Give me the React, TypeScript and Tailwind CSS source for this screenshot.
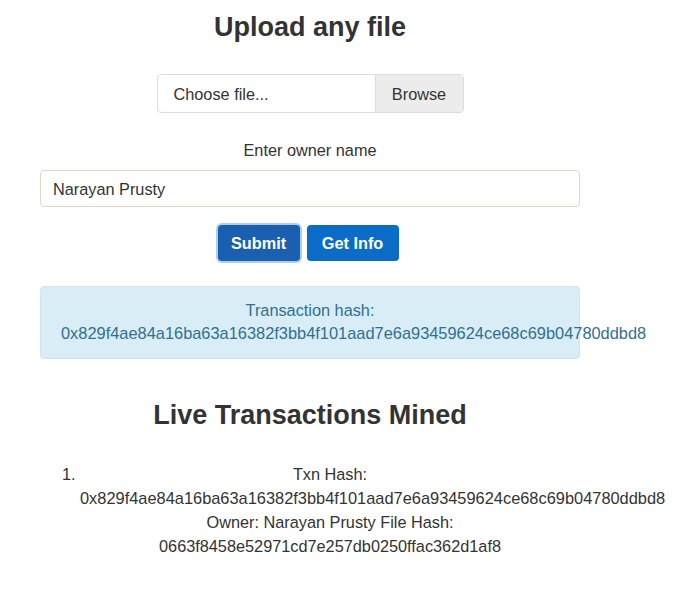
import React from "react";

const font = { fontFamily: '"Liberation Sans", Arial, Helvetica, sans-serif' };

const txHash = "0x829f4ae84a16ba63a16382f3bb4f101aad7e6a93459624ce68c69b04780ddbd8";

export default function App() {
  return (
    <div className="min-h-screen bg-white text-[#333] text-[16.3px] leading-[24px]" style={font}>
      <div className="ml-[40px] w-[540px] pt-[12px]">
        <h1 className="text-center text-[27px] leading-[30px] font-bold">Upload any file</h1>

        <div className="mx-auto mt-[32px] flex h-[39px] w-[307px] rounded-[4px] border border-[#ddd] overflow-hidden">
          <div className="flex flex-1 items-center pl-[16px]">Choose file...</div>
          <div className="flex w-[88px] items-center justify-center border-l border-[#ddd] bg-[#ececec]">
            Browse
          </div>
        </div>

        <p className="mt-[25px] text-center">Enter owner name</p>
        <div className="mt-[8px] flex h-[37px] items-center rounded-[4px] border border-[#ded8c8] pl-[12px]">
          Narayan Prusty
        </div>

        <div className="mt-[18px] flex justify-center gap-[7px] pr-[4px]">
          <button className="h-[36px] w-[82px] rounded-[4px] bg-[#1a5fb0] font-bold text-white ring-2 ring-[#a9d0ef]">
            Submit
          </button>
          <button className="h-[36px] w-[92px] rounded-[4px] bg-[#0b6cc8] font-bold text-white">Get Info</button>
        </div>

        <div className="mt-[25px] rounded-[4px] border border-[#cfe6f2] bg-[#d9edf7] pt-[12px] pb-[13px] text-center leading-[23px] text-[#31708f]">
          <div>Transaction hash:</div>
          <div className="whitespace-nowrap pl-[20px] text-left text-[16.4px]">{txHash}</div>
        </div>

        <h2 className="mt-[41px] text-center text-[27px] leading-[30px] font-bold">Live Transactions Mined</h2>

        <ol className="mt-[32px] list-decimal pl-[40px] text-center leading-[24px]">
          <li>
            <div>Txn Hash:</div>
            <div className="whitespace-nowrap text-left text-[16.4px]">{txHash}</div>
            <div>Owner: Narayan Prusty File Hash:</div>
            <div>0663f8458e52971cd7e257db0250ffac362d1af8</div>
          </li>
        </ol>
      </div>
    </div>
  );
}
